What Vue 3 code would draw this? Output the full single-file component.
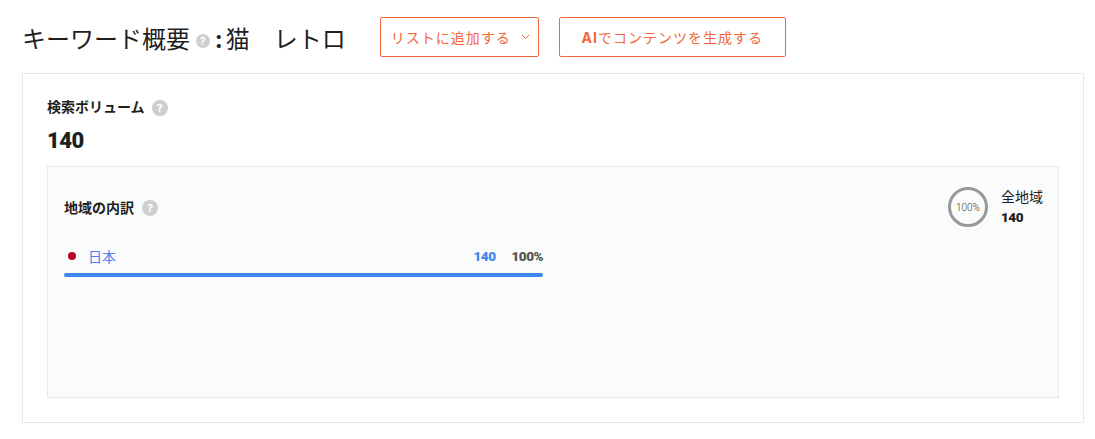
<script setup>
const regions = [
  { name: '日本', volume: 140, percent: 100 },
]
</script>

<template>
  <div class="page">
    <header class="head">
      <h1 class="head-title">
        キーワード概要
        <span class="help help-sm">?</span>
        <span class="colon">:</span>猫　レトロ
      </h1>
      <button class="btn btn-list">
        リストに追加する
        <svg class="chevron" width="9" height="6" viewBox="0 0 9 6">
          <path d="M1 1l3.5 3.5L8 1" fill="none" stroke="#f0683a" stroke-width="1" />
        </svg>
      </button>
      <button class="btn btn-ai"><b>AI</b>でコンテンツを生成する</button>
    </header>

    <section class="card">
      <div class="vol-label"><span class="lift">検索ボリューム</span> <span class="help">?</span></div>
      <div class="vol-num">140</div>

      <div class="panel">
        <div class="panel-left">
          <div class="panel-title"><span class="lift">地域の内訳</span> <span class="help">?</span></div>
          <div v-for="r in regions" :key="r.name" class="region">
            <div class="region-row">
              <span class="flag"><i></i></span>
              <span class="region-name">{{ r.name }}</span>
              <span class="region-vol">{{ r.volume }}</span>
              <span class="region-pct">{{ r.percent }}%</span>
            </div>
            <div class="bar"><div class="bar-fill" :style="{ width: r.percent + '%' }"></div></div>
          </div>
        </div>
        <div class="total">
          <div class="ring">100%</div>
          <div class="total-text">
            <div class="total-name">全地域</div>
            <div class="total-num">140</div>
          </div>
        </div>
      </div>
    </section>
  </div>
</template>

<style>
html, body { background: #fff; }
</style>

<style scoped>
.page {
  width: 1095px;
  height: 439px;
  box-sizing: border-box;
  padding: 17px 11px 0 22px;
  font-family: Inter, "Noto Sans CJK JP", sans-serif;
  color: #1f1f1f;
}
.head {
  display: flex;
  align-items: flex-start;
  height: 40px;
  margin-bottom: 16px;
}
.head-title {
  margin: 0 34px 0 0;
  padding-top: 3px;
  font-size: 24px;
  font-weight: 400;
  line-height: 40px;
  white-space: nowrap;
}
.colon { font-weight: 700; margin: 0 3px 0 0; }
.help {
  display: inline-flex;
  align-items: center;
  justify-content: center;
  width: 16px;
  height: 16px;
  margin-left: 4px;
  border-radius: 50%;
  background: #cfcfcf;
  color: #fff;
  font-size: 11px;
  font-weight: 700;
  line-height: 1;
}
.help-sm { width: 14px; height: 14px; font-size: 10px; margin: 0 5px 0 -1px; vertical-align: 3px; }
.btn {
  box-sizing: border-box;
  height: 40px;
  border: 1px solid #f0683a;
  border-radius: 2px;
  background: #fff;
  color: #f0683a;
  font-family: inherit;
  font-size: 14px;
  letter-spacing: 1px;
  padding: 0;
  white-space: nowrap;
}
.btn-list { width: 159px; margin-right: 20px; text-align: left; padding-left: 10px; }
.chevron { margin-left: 5px; vertical-align: 3px; }
.btn-ai { width: 227px; }
.btn-ai b { font-weight: 700; }
.card {
  box-sizing: border-box;
  height: 350px;
  border: 1px solid #e8e9e9;
  padding: 24px;
}
.vol-label {
  height: 20px;
  font-size: 14px;
  font-weight: 700;
  line-height: 20px;
  display: flex;
  align-items: center;
}
.lift { margin-top: -2px; }
.vol-label .help { margin-left: 7px; }
.vol-num {
  font-family: Roboto, sans-serif;
  font-size: 22px;
  font-weight: 900;
  letter-spacing: -0.5px;
  line-height: 28px;
  margin-top: 9px;
  margin-bottom: 11px;
}
.panel {
  box-sizing: border-box;
  height: 232px;
  border: 1px solid #e8e9e9;
  background: #fafbfb;
  padding: 20px 15px 0 16px;
  display: flex;
  justify-content: space-between;
}
.panel-left { width: 479px; }
.panel-title {
  height: 20px;
  display: flex;
  align-items: center;
  font-size: 14px;
  font-weight: 700;
  line-height: 20px;
  margin-top: 11px;
}
.panel-title .lift { margin-top: -1px; }
.panel-title .help { margin-left: 8px; }
.region { margin-top: 27px; }
.region-row {
  display: flex;
  align-items: center;
  height: 22px;
  font-size: 14px;
  margin-bottom: 6px;
}
.flag {
  width: 16px;
  height: 12px;
  background: #fff;
  display: flex;
  align-items: center;
  justify-content: center;
  margin-right: 8px;
}
.flag i {
  width: 8px;
  height: 8px;
  border-radius: 50%;
  background: #bc002d;
}
.region-name { color: #4d7ff0; flex: 1; font-size: 14px; }
.region-vol, .region-pct {
  font-family: Roboto, sans-serif;
  font-weight: 900;
  font-size: 13.5px;
  letter-spacing: -0.5px;
}
.region-vol { color: #3f86f0; margin-right: 16px; }
.region-pct { color: #555; }
.bar { height: 4px; border-radius: 2px; background: #e8e9e9; }
.bar-fill { height: 100%; border-radius: 2px; background: #3f86f0; }
.total {
  display: flex;
  align-items: flex-start;
}
.ring {
  box-sizing: border-box;
  width: 40px;
  height: 40px;
  border: 3.5px solid #999;
  border-radius: 50%;
  display: flex;
  align-items: center;
  justify-content: center;
  font-family: Roboto, sans-serif;
  font-size: 10px;
  font-weight: 300;
  color: #444;
  margin-right: 13px;
}
.total-name { font-size: 14px; line-height: 20px; }
.total-num {
  font-family: Roboto, sans-serif;
  font-size: 13.5px;
  font-weight: 900;
  letter-spacing: -0.5px;
  line-height: 20px;
}
</style>
